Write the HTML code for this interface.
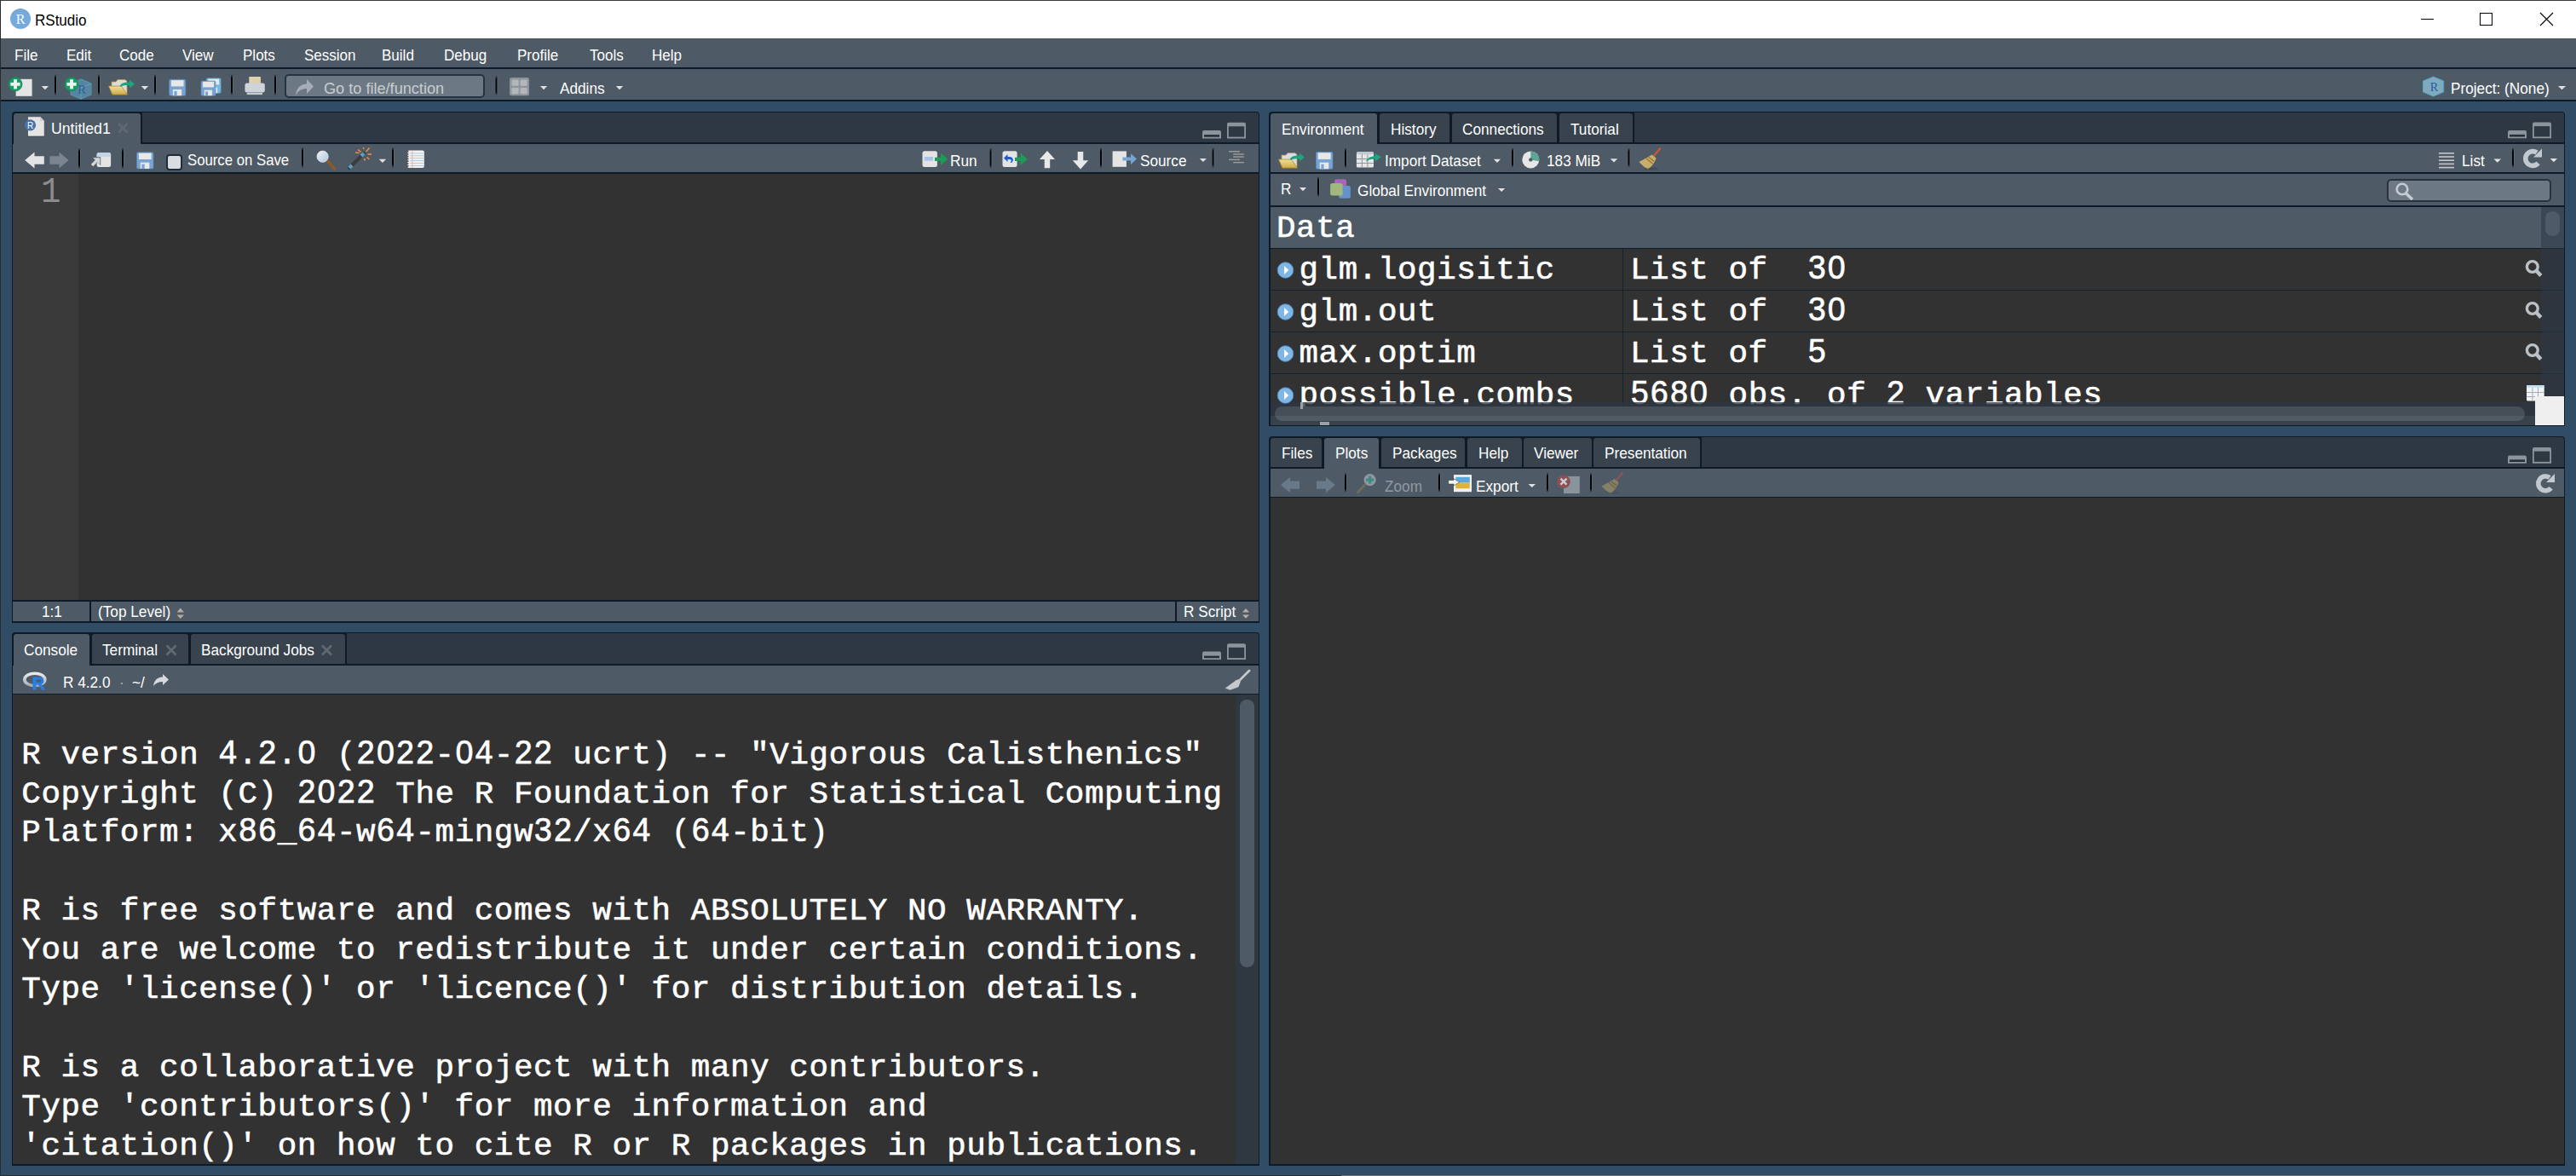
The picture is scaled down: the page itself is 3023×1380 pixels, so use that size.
<!DOCTYPE html>
<html><head><meta charset="utf-8"><title>RStudio</title>
<style>
html,body{margin:0;padding:0;width:3023px;height:1380px;overflow:hidden;background:#314c65}
body>div,body>svg{position:absolute}
.t{white-space:pre}
.m{-webkit-text-stroke:0.6px #fff}
.d{display:inline-block;transform:scaleY(1.09);transform-origin:0 28.7px}
</style></head><body>
<div style="left:0px;top:0px;width:3023px;height:1380px;background:#314c65;"></div>
<div style="left:0px;top:0px;width:3023px;height:45px;background:#ffffff;"></div>
<div style="left:0px;top:0px;width:3023px;height:1px;background:#3c3c3c;"></div>
<div style="left:0px;top:0px;width:1px;height:1380px;background:#2b2b2b;"></div>
<div class="t" style="left:41.00px;top:14.94px;font-size:18.5px;line-height:18.5px;color:#000;font-family:'Liberation Sans', sans-serif;transform:scaleX(0.92);transform-origin:0 0;">RStudio</div>
<div style="left:1px;top:45px;width:3022px;height:34px;background:#4e5a65;"></div>
<div style="left:1px;top:79px;width:3022px;height:2px;background:#0d1b28;"></div>
<div class="t" style="left:16.75px;top:55.94px;font-size:18.5px;line-height:18.5px;color:#fff;font-family:'Liberation Sans', sans-serif;transform:scaleX(0.92);transform-origin:0 0;">File</div>
<div class="t" style="left:77.75px;top:55.94px;font-size:18.5px;line-height:18.5px;color:#fff;font-family:'Liberation Sans', sans-serif;transform:scaleX(0.92);transform-origin:0 0;">Edit</div>
<div class="t" style="left:140.00px;top:55.94px;font-size:18.5px;line-height:18.5px;color:#fff;font-family:'Liberation Sans', sans-serif;transform:scaleX(0.92);transform-origin:0 0;">Code</div>
<div class="t" style="left:214.00px;top:55.94px;font-size:18.5px;line-height:18.5px;color:#fff;font-family:'Liberation Sans', sans-serif;transform:scaleX(0.92);transform-origin:0 0;">View</div>
<div class="t" style="left:285.00px;top:55.94px;font-size:18.5px;line-height:18.5px;color:#fff;font-family:'Liberation Sans', sans-serif;transform:scaleX(0.92);transform-origin:0 0;">Plots</div>
<div class="t" style="left:356.50px;top:55.94px;font-size:18.5px;line-height:18.5px;color:#fff;font-family:'Liberation Sans', sans-serif;transform:scaleX(0.92);transform-origin:0 0;">Session</div>
<div class="t" style="left:448.00px;top:55.94px;font-size:18.5px;line-height:18.5px;color:#fff;font-family:'Liberation Sans', sans-serif;transform:scaleX(0.92);transform-origin:0 0;">Build</div>
<div class="t" style="left:521.00px;top:55.94px;font-size:18.5px;line-height:18.5px;color:#fff;font-family:'Liberation Sans', sans-serif;transform:scaleX(0.92);transform-origin:0 0;">Debug</div>
<div class="t" style="left:607.00px;top:55.94px;font-size:18.5px;line-height:18.5px;color:#fff;font-family:'Liberation Sans', sans-serif;transform:scaleX(0.92);transform-origin:0 0;">Profile</div>
<div class="t" style="left:691.50px;top:55.94px;font-size:18.5px;line-height:18.5px;color:#fff;font-family:'Liberation Sans', sans-serif;transform:scaleX(0.92);transform-origin:0 0;">Tools</div>
<div class="t" style="left:765.00px;top:55.94px;font-size:18.5px;line-height:18.5px;color:#fff;font-family:'Liberation Sans', sans-serif;transform:scaleX(0.92);transform-origin:0 0;">Help</div>
<div style="left:1px;top:81px;width:3022px;height:36px;background:#4e5a65;"></div>
<div style="left:1px;top:117px;width:3022px;height:2px;background:#0d1b28;"></div>
<div style="left:14px;top:131px;width:1464px;height:600px;background:#0d1b28;border-radius:4px 4px 0 0"></div>
<div style="left:166.5px;top:132px;width:1310.5px;height:35px;background:#2e3842;border-radius:0 3px 0 0"></div>
<div style="left:16px;top:133px;width:148.5px;height:36px;background:#4e5a65;border-radius:3px 3px 0 0"></div>
<div style="left:15px;top:169px;width:1462px;height:33px;background:#4e5a65;"></div>
<div style="left:15px;top:204px;width:1462px;height:500px;background:#323232;"></div>
<div style="left:15px;top:204px;width:77px;height:500px;background:#3a3a3a;"></div>
<div style="left:15px;top:706px;width:1462px;height:23px;background:#4e5a65;"></div>
<div style="left:105px;top:706px;width:2px;height:23px;background:#0d1b28;"></div>
<div style="left:1379px;top:706px;width:2px;height:23px;background:#0d1b28;"></div>
<div style="left:14px;top:742px;width:1464px;height:626px;background:#0d1b28;border-radius:4px 4px 0 0"></div>
<div style="left:407px;top:743px;width:1070px;height:36px;background:#2e3842;border-radius:0 3px 0 0"></div>
<div style="left:16px;top:744px;width:89px;height:37px;background:#4e5a65;border-radius:3px 3px 0 0"></div>
<div style="left:107.7px;top:744px;width:113.3px;height:35px;background:#38434d;border-radius:3px 3px 0 0"></div>
<div style="left:224px;top:744px;width:181px;height:35px;background:#38434d;border-radius:3px 3px 0 0"></div>
<div style="left:15px;top:781px;width:1462px;height:33px;background:#4e5a65;"></div>
<div style="left:15px;top:815px;width:1462px;height:551px;background:#323232;"></div>
<div style="left:1450px;top:815px;width:27px;height:551px;background:#2f3740;"></div>
<div style="left:1455px;top:821px;width:17px;height:314px;background:#4e5a65;border-radius:8px"></div>
<div style="left:1489px;top:131px;width:1521px;height:369px;background:#0d1b28;border-radius:4px 4px 0 0"></div>
<div style="left:1918px;top:132px;width:1091px;height:35px;background:#2e3842;border-radius:0 3px 0 0"></div>
<div style="left:1491px;top:133px;width:125px;height:36px;background:#4e5a65;border-radius:3px 3px 0 0"></div>
<div style="left:1619px;top:133px;width:82px;height:34px;background:#38434d;border-radius:3px 3px 0 0"></div>
<div style="left:1704px;top:133px;width:123px;height:34px;background:#38434d;border-radius:3px 3px 0 0"></div>
<div style="left:1830px;top:133px;width:86px;height:34px;background:#38434d;border-radius:3px 3px 0 0"></div>
<div style="left:1491px;top:169px;width:1518px;height:33px;background:#4e5a65;"></div>
<div style="left:1491px;top:204px;width:1518px;height:37px;background:#4e5a65;"></div>
<div style="left:1491px;top:243px;width:1518px;height:48px;background:#4e5a65;"></div>
<div style="left:1491px;top:292px;width:1518px;height:207px;background:#323232;"></div>
<div style="left:1491px;top:340px;width:1518px;height:1px;background:#13222f;"></div>
<div style="left:1491px;top:389px;width:1518px;height:1px;background:#13222f;"></div>
<div style="left:1491px;top:438px;width:1518px;height:1px;background:#13222f;"></div>
<div style="left:1904px;top:292px;width:1px;height:207px;background:#13222f;"></div>
<div style="left:2801px;top:210px;width:193px;height:27px;background:#6c7984;border:2px solid #26333f;border-radius:5px;box-sizing:border-box"></div>
<div style="left:1489px;top:512px;width:1521px;height:856px;background:#0d1b28;border-radius:4px 4px 0 0"></div>
<div style="left:1997px;top:513px;width:1012px;height:35px;background:#2e3842;border-radius:0 3px 0 0"></div>
<div style="left:1491px;top:514px;width:60px;height:34px;background:#38434d;border-radius:3px 3px 0 0"></div>
<div style="left:1554px;top:514px;width:64px;height:36px;background:#4e5a65;border-radius:3px 3px 0 0"></div>
<div style="left:1621px;top:514px;width:98px;height:34px;background:#38434d;border-radius:3px 3px 0 0"></div>
<div style="left:1722px;top:514px;width:63.5px;height:34px;background:#38434d;border-radius:3px 3px 0 0"></div>
<div style="left:1788px;top:514px;width:79.5px;height:34px;background:#38434d;border-radius:3px 3px 0 0"></div>
<div style="left:1870px;top:514px;width:125px;height:34px;background:#38434d;border-radius:3px 3px 0 0"></div>
<div style="left:1491px;top:550px;width:1518px;height:33px;background:#4e5a65;"></div>
<div style="left:1491px;top:584px;width:1518px;height:782px;background:#323232;"></div>
<div style="left:334px;top:87px;width:235px;height:28px;background:#6c7984;border:2px solid #26333f;border-radius:5px;box-sizing:border-box"></div>
<div style="left:0px;top:1379px;width:3023px;height:1px;background:#2b2b2b;"></div>
<div style="left:1574px;top:1379px;width:1449px;height:1px;background:#727272;"></div>
<div class="t" style="left:59.90px;top:142.14px;font-size:18.5px;line-height:18.5px;color:#fff;font-family:'Liberation Sans', sans-serif;transform:scaleX(0.955);transform-origin:0 0;">Untitled1</div>
<div class="t" style="left:219.50px;top:178.89px;font-size:18.5px;line-height:18.5px;color:#fff;font-family:'Liberation Sans', sans-serif;transform:scaleX(0.905);transform-origin:0 0;">Source on Save</div>
<div class="t" style="left:1115.40px;top:180.04px;font-size:18.5px;line-height:18.5px;color:#fff;font-family:'Liberation Sans', sans-serif;transform:scaleX(0.93);transform-origin:0 0;">Run</div>
<div class="t" style="left:1338.00px;top:180.14px;font-size:18.5px;line-height:18.5px;color:#fff;font-family:'Liberation Sans', sans-serif;transform:scaleX(0.93);transform-origin:0 0;">Source</div>
<div class="t" style="left:48.50px;top:708.89px;font-size:18.5px;line-height:18.5px;color:#fff;font-family:'Liberation Sans', sans-serif;transform:scaleX(0.93);transform-origin:0 0;">1:1</div>
<div class="t" style="left:114.50px;top:708.89px;font-size:18.5px;line-height:18.5px;color:#fff;font-family:'Liberation Sans', sans-serif;transform:scaleX(0.93);transform-origin:0 0;">(Top Level)</div>
<div class="t" style="left:1389.00px;top:709.34px;font-size:18.5px;line-height:18.5px;color:#fff;font-family:'Liberation Sans', sans-serif;transform:scaleX(0.93);transform-origin:0 0;">R Script</div>
<div class="t" style="left:48.00px;top:207.62px;font-size:39px;line-height:39px;color:#8c8c8c;font-family:'Liberation Mono', monospace;"><span class="d">1</span></div>
<div class="t" style="left:380.00px;top:94.89px;font-size:18.5px;line-height:18.5px;color:#c9cdd1;font-family:'Liberation Sans', sans-serif;transform:scaleX(0.98);transform-origin:0 0;">Go to file/function</div>
<div class="t" style="left:657.00px;top:95.14px;font-size:18.5px;line-height:18.5px;color:#fff;font-family:'Liberation Sans', sans-serif;transform:scaleX(0.93);transform-origin:0 0;">Addins</div>
<div class="t" style="left:2875.70px;top:94.84px;font-size:18.5px;line-height:18.5px;color:#fff;font-family:'Liberation Sans', sans-serif;transform:scaleX(0.93);transform-origin:0 0;">Project: (None)</div>
<div class="t" style="left:27.75px;top:753.89px;font-size:18.5px;line-height:18.5px;color:#fff;font-family:'Liberation Sans', sans-serif;transform:scaleX(0.93);transform-origin:0 0;">Console</div>
<div class="t" style="left:120.00px;top:753.89px;font-size:18.5px;line-height:18.5px;color:#fff;font-family:'Liberation Sans', sans-serif;transform:scaleX(0.93);transform-origin:0 0;">Terminal</div>
<div class="t" style="left:236.00px;top:753.89px;font-size:18.5px;line-height:18.5px;color:#fff;font-family:'Liberation Sans', sans-serif;transform:scaleX(0.93);transform-origin:0 0;">Background Jobs</div>
<div class="t" style="left:73.90px;top:792.04px;font-size:18.5px;line-height:18.5px;color:#fff;font-family:'Liberation Sans', sans-serif;transform:scaleX(0.93);transform-origin:0 0;">R 4.2.0</div>
<div class="t" style="left:139.50px;top:792.04px;font-size:18.5px;line-height:18.5px;color:#a8b0b8;font-family:'Liberation Sans', sans-serif;transform:scaleX(0.93);transform-origin:0 0;">·</div>
<div class="t" style="left:155.00px;top:792.04px;font-size:18.5px;line-height:18.5px;color:#fff;font-family:'Liberation Sans', sans-serif;transform:scaleX(0.93);transform-origin:0 0;">~/</div>
<div class="t m" style="left:25.30px;top:867.52px;font-size:37.5px;line-height:37.5px;color:#fff;font-family:'Liberation Mono', monospace;letter-spacing:0.6px">R version <span class="d">4</span>.<span class="d">2</span>.<span class="d">0</span> (<span class="d">2022</span>-<span class="d">04</span>-<span class="d">22</span> ucrt) -- "Vigorous Calisthenics"</div>
<div style="left:356.66px;top:878.05px;width:6.8px;height:8.6px;background:#323232"></div>
<div style="left:449.07px;top:878.05px;width:6.8px;height:8.6px;background:#323232"></div>
<div style="left:541.49px;top:878.05px;width:6.8px;height:8.6px;background:#323232"></div>
<div class="t m" style="left:25.30px;top:913.50px;font-size:37.5px;line-height:37.5px;color:#fff;font-family:'Liberation Mono', monospace;letter-spacing:0.6px">Copyright (C) <span class="d">2022</span> The R Foundation for Statistical Computing</div>
<div style="left:379.76px;top:924.02px;width:6.8px;height:8.6px;background:#323232"></div>
<div class="t m" style="left:25.30px;top:959.47px;font-size:37.5px;line-height:37.5px;color:#fff;font-family:'Liberation Mono', monospace;letter-spacing:0.6px">Platform: x<span class="d">86</span>_<span class="d">64</span>-w<span class="d">64</span>-mingw<span class="d">32</span>/x<span class="d">64</span> (<span class="d">64</span>-bit)</div>
<div class="t m" style="left:25.30px;top:1051.42px;font-size:37.5px;line-height:37.5px;color:#fff;font-family:'Liberation Mono', monospace;letter-spacing:0.6px">R is free software and comes with ABSOLUTELY NO WARRANTY.</div>
<div class="t m" style="left:25.30px;top:1097.40px;font-size:37.5px;line-height:37.5px;color:#fff;font-family:'Liberation Mono', monospace;letter-spacing:0.6px">You are welcome to redistribute it under certain conditions.</div>
<div class="t m" style="left:25.30px;top:1143.37px;font-size:37.5px;line-height:37.5px;color:#fff;font-family:'Liberation Mono', monospace;letter-spacing:0.6px">Type 'license()' or 'licence()' for distribution details.</div>
<div class="t m" style="left:25.30px;top:1235.32px;font-size:37.5px;line-height:37.5px;color:#fff;font-family:'Liberation Mono', monospace;letter-spacing:0.6px">R is a collaborative project with many contributors.</div>
<div class="t m" style="left:25.30px;top:1281.30px;font-size:37.5px;line-height:37.5px;color:#fff;font-family:'Liberation Mono', monospace;letter-spacing:0.6px">Type 'contributors()' for more information and</div>
<div class="t m" style="left:25.30px;top:1327.27px;font-size:37.5px;line-height:37.5px;color:#fff;font-family:'Liberation Mono', monospace;letter-spacing:0.6px">'citation()' on how to cite R or R packages in publications.</div>
<div class="t" style="left:1503.50px;top:142.64px;font-size:18.5px;line-height:18.5px;color:#fff;font-family:'Liberation Sans', sans-serif;transform:scaleX(0.93);transform-origin:0 0;">Environment</div>
<div class="t" style="left:1631.50px;top:142.64px;font-size:18.5px;line-height:18.5px;color:#fff;font-family:'Liberation Sans', sans-serif;transform:scaleX(0.93);transform-origin:0 0;">History</div>
<div class="t" style="left:1716.00px;top:142.64px;font-size:18.5px;line-height:18.5px;color:#fff;font-family:'Liberation Sans', sans-serif;transform:scaleX(0.93);transform-origin:0 0;">Connections</div>
<div class="t" style="left:1842.75px;top:142.64px;font-size:18.5px;line-height:18.5px;color:#fff;font-family:'Liberation Sans', sans-serif;transform:scaleX(0.93);transform-origin:0 0;">Tutorial</div>
<div class="t" style="left:1624.50px;top:180.14px;font-size:18.5px;line-height:18.5px;color:#fff;font-family:'Liberation Sans', sans-serif;transform:scaleX(0.93);transform-origin:0 0;">Import Dataset</div>
<div class="t" style="left:1815.40px;top:179.74px;font-size:18.5px;line-height:18.5px;color:#fff;font-family:'Liberation Sans', sans-serif;transform:scaleX(0.93);transform-origin:0 0;">183 MiB</div>
<div class="t" style="left:2888.80px;top:180.14px;font-size:18.5px;line-height:18.5px;color:#fff;font-family:'Liberation Sans', sans-serif;transform:scaleX(0.93);transform-origin:0 0;">List</div>
<div class="t" style="left:1502.90px;top:213.14px;font-size:18.5px;line-height:18.5px;color:#fff;font-family:'Liberation Sans', sans-serif;transform:scaleX(0.93);transform-origin:0 0;">R</div>
<div class="t" style="left:1592.50px;top:214.94px;font-size:18.5px;line-height:18.5px;color:#fff;font-family:'Liberation Sans', sans-serif;transform:scaleX(0.93);transform-origin:0 0;">Global Environment</div>
<div class="t m" style="left:1498.00px;top:250.27px;font-size:37.5px;line-height:37.5px;color:#fff;font-family:'Liberation Mono', monospace;letter-spacing:0.6px">Data</div>
<div class="t m" style="left:1524.50px;top:299.27px;font-size:37.5px;line-height:37.5px;color:#fff;font-family:'Liberation Mono', monospace;letter-spacing:0.6px">glm.logisitic</div>
<div class="t m" style="left:1913.00px;top:299.27px;font-size:37.5px;line-height:37.5px;color:#fff;font-family:'Liberation Mono', monospace;letter-spacing:0.6px">List of  <span class="d">30</span></div>
<div style="left:2151.94px;top:309.80px;width:6.8px;height:8.6px;background:#323232"></div>
<div class="t m" style="left:1524.50px;top:348.27px;font-size:37.5px;line-height:37.5px;color:#fff;font-family:'Liberation Mono', monospace;letter-spacing:0.6px">glm.out</div>
<div class="t m" style="left:1913.00px;top:348.27px;font-size:37.5px;line-height:37.5px;color:#fff;font-family:'Liberation Mono', monospace;letter-spacing:0.6px">List of  <span class="d">30</span></div>
<div style="left:2151.94px;top:358.80px;width:6.8px;height:8.6px;background:#323232"></div>
<div class="t m" style="left:1524.50px;top:397.27px;font-size:37.5px;line-height:37.5px;color:#fff;font-family:'Liberation Mono', monospace;letter-spacing:0.6px">max.optim</div>
<div class="t m" style="left:1913.00px;top:397.27px;font-size:37.5px;line-height:37.5px;color:#fff;font-family:'Liberation Mono', monospace;letter-spacing:0.6px">List of  <span class="d">5</span></div>
<div class="t m" style="left:1524.50px;top:446.27px;font-size:37.5px;line-height:37.5px;color:#fff;font-family:'Liberation Mono', monospace;letter-spacing:0.6px">possible.combs</div>
<div class="t m" style="left:1913.00px;top:446.27px;font-size:37.5px;line-height:37.5px;color:#fff;font-family:'Liberation Mono', monospace;letter-spacing:0.6px"><span class="d">5680</span> obs. of <span class="d">2</span> variables</div>
<div style="left:1990.21px;top:456.80px;width:6.8px;height:8.6px;background:#323232"></div>
<div class="t" style="left:1504.00px;top:523.14px;font-size:18.5px;line-height:18.5px;color:#fff;font-family:'Liberation Sans', sans-serif;transform:scaleX(0.93);transform-origin:0 0;">Files</div>
<div class="t" style="left:1566.50px;top:523.14px;font-size:18.5px;line-height:18.5px;color:#fff;font-family:'Liberation Sans', sans-serif;transform:scaleX(0.93);transform-origin:0 0;">Plots</div>
<div class="t" style="left:1634.00px;top:523.14px;font-size:18.5px;line-height:18.5px;color:#fff;font-family:'Liberation Sans', sans-serif;transform:scaleX(0.93);transform-origin:0 0;">Packages</div>
<div class="t" style="left:1734.50px;top:523.14px;font-size:18.5px;line-height:18.5px;color:#fff;font-family:'Liberation Sans', sans-serif;transform:scaleX(0.93);transform-origin:0 0;">Help</div>
<div class="t" style="left:1800.00px;top:523.14px;font-size:18.5px;line-height:18.5px;color:#fff;font-family:'Liberation Sans', sans-serif;transform:scaleX(0.93);transform-origin:0 0;">Viewer</div>
<div class="t" style="left:1882.75px;top:523.14px;font-size:18.5px;line-height:18.5px;color:#fff;font-family:'Liberation Sans', sans-serif;transform:scaleX(0.93);transform-origin:0 0;">Presentation</div>
<div class="t" style="left:1624.50px;top:562.14px;font-size:18.5px;line-height:18.5px;color:#8f9aa3;font-family:'Liberation Sans', sans-serif;transform:scaleX(0.93);transform-origin:0 0;">Zoom</div>
<div class="t" style="left:1732.30px;top:561.74px;font-size:18.5px;line-height:18.5px;color:#fff;font-family:'Liberation Sans', sans-serif;transform:scaleX(0.93);transform-origin:0 0;">Export</div>
<div style="left:2982px;top:243px;width:27px;height:222px;background:rgba(45,57,74,0.55);"></div>
<div style="left:2987px;top:248px;width:17px;height:29px;background:#4e5a65;border-radius:8px"></div>
<div style="left:1491px;top:472px;width:1491px;height:16px;background:rgba(45,54,65,0.78);"></div>
<div style="left:1491px;top:488px;width:1491px;height:11px;background:#38424b;"></div>
<div style="left:1496px;top:477px;width:1467px;height:17px;background:linear-gradient(#464e57 0,#464e57 11px,#505b66 11px);border-radius:8.5px"></div>
<div style="left:194.7px;top:180.9px;width:19.0px;height:19.0px;background:#d9dde1;border:2px solid #1f2d3a;border-radius:4px;box-sizing:border-box"></div>
<svg style="left:0;top:0" width="3023" height="1380" viewBox="0 0 3023 1380"><defs><linearGradient id="sepg" x1="0" y1="0" x2="0" y2="1"><stop offset="0" stop-color="#000" stop-opacity="0"/><stop offset="0.18" stop-color="#000" stop-opacity="0.95"/><stop offset="0.82" stop-color="#000" stop-opacity="0.95"/><stop offset="1" stop-color="#000" stop-opacity="0"/></linearGradient><linearGradient id="fold" x1="0" y1="0" x2="0" y2="1"><stop offset="0" stop-color="#eedfa0"/><stop offset="1" stop-color="#d1aa45"/></linearGradient><linearGradient id="lens" x1="0" y1="0" x2="1" y2="1"><stop offset="0" stop-color="#f4f4f4"/><stop offset="1" stop-color="#a9c4e0"/></linearGradient><linearGradient id="ring" x1="0" y1="0" x2="0" y2="1"><stop offset="0" stop-color="#e9eaec"/><stop offset="1" stop-color="#a9adb3"/></linearGradient></defs><circle cx="24" cy="22" r="12" fill="#75aadb"/><text x="24" y="28" text-anchor="middle" font-family="Liberation Serif" font-size="16" fill="#fff">R</text><rect x="2841" y="22" width="15" height="1" fill="#000"/><rect x="2910.5" y="15.5" width="14" height="14" fill="none" stroke="#000" stroke-width="1"/><path d="M2981 15L2996 30M2996 15L2981 30" stroke="#000" stroke-width="1.1"/><rect x="18.6" y="92.8" width="19" height="20" fill="#e4e4e4"/><circle cx="18" cy="98.8" r="8" fill="#179c66" stroke="#0f8a57" stroke-width="0.8"/><rect x="12.4" y="96.88" width="11.2" height="3.84" fill="#eef2ee"/><rect x="16.08" y="93.2" width="3.84" height="11.2" fill="#eef2ee"/><path d="M48.7 101H57L52.85 105.2Z" fill="#e2e2e2"/><rect x="64" y="87" width="2" height="25" fill="url(#sepg)"/><rect x="66" y="90" width="1" height="19" fill="#66717b" opacity="0.5"/><g opacity="0.75"><path d="M83 97.948 L95.0 92.8 L107 97.948 L107 111.05199999999999 L95.0 116.19999999999999 L83 111.05199999999999Z" fill="#5a93b5" stroke="#4fb3cf" stroke-width="1"/><path d="M83 97.948 L95.0 103.096 L107 97.948 M95.0 103.096 L95.0 116.19999999999999" stroke="#6cc3da" stroke-width="0.8" fill="none"/><text x="96.0" y="109.648" text-anchor="middle" font-family="Liberation Serif" font-size="14.508" fill="#1f5fa8">R</text></g><circle cx="84" cy="98.8" r="8" fill="#179c66" stroke="#0f8a57" stroke-width="0.8"/><rect x="78.4" y="96.88" width="11.2" height="3.84" fill="#eef2ee"/><rect x="82.08" y="93.2" width="3.84" height="11.2" fill="#eef2ee"/><rect x="115" y="87" width="2" height="25" fill="url(#sepg)"/><rect x="117" y="90" width="1" height="19" fill="#66717b" opacity="0.5"/><g transform="translate(127,92.5) scale(1.0)"><path d="M4 3.5 L9 3.5 L11 1 L20 1 L22 3 L22 17 L4 17Z" fill="#dcdcdc" stroke="#b89a3c" stroke-width="0.8"/><path d="M0.5 8.5 L15.5 8.5 L22.5 18.5 L5 18.5Z" fill="url(#fold)" stroke="#b08f2e" stroke-width="0.8"/><path d="M14 7.5 C17 4 21 3.6 25 4.2 L25 1 L31 6 L25 11 L25 7.8 C21 7.2 17.5 7.6 14 9.5Z" fill="#1fa37e"/></g><path d="M165.7 101H174.1L169.89999999999998 105.2Z" fill="#e2e2e2"/><rect x="181" y="87" width="2" height="25" fill="url(#sepg)"/><rect x="183" y="90" width="1" height="19" fill="#66717b" opacity="0.5"/><rect x="198.6" y="93.2" width="19.200000000000017" height="19.0" rx="1.5" fill="#77a4d3" stroke="#5b86b5" stroke-width="0.6"/><rect x="200.904" y="94.15" width="14.592000000000013" height="7.22" fill="#e8e8e8"/><rect x="202.824" y="104.98" width="10.36800000000001" height="7.22" fill="#e8e8e8"/><rect x="204.36" y="106.88" width="3.2640000000000033" height="5.32" fill="#77a4d3"/><rect x="242.3" y="91.8" width="16.899999999999977" height="17.5" rx="1.5" fill="#74b9de" stroke="#4f9cc8" stroke-width="0.6"/><rect x="244.328" y="92.675" width="12.843999999999983" height="6.65" fill="#e8e8e8"/><rect x="246.018" y="102.64999999999999" width="9.125999999999989" height="6.65" fill="#e8e8e8"/><rect x="247.37" y="104.39999999999999" width="2.8729999999999962" height="4.9" fill="#74b9de"/><rect x="236" y="95" width="17" height="17.200000000000003" rx="1.5" fill="#77a4d3" stroke="#5b86b5" stroke-width="0.6"/><rect x="238.04" y="95.86" width="12.92" height="6.536000000000001" fill="#e8e8e8"/><rect x="239.74" y="105.664" width="9.18" height="6.536000000000001" fill="#e8e8e8"/><rect x="241.1" y="107.384" width="2.89" height="4.816000000000002" fill="#77a4d3"/><rect x="271" y="87" width="2" height="25" fill="url(#sepg)"/><rect x="273" y="90" width="1" height="19" fill="#66717b" opacity="0.5"/><rect x="292.3" y="90" width="13.6" height="10" fill="#ddd2ad"/><rect x="287.4" y="97.4" width="23.4" height="11.2" rx="2.5" fill="#cfd3da"/><rect x="289.8" y="108.9" width="18.2" height="2.2" fill="#c4ccd4"/><rect x="322" y="87" width="2" height="25" fill="url(#sepg)"/><rect x="324" y="90" width="1" height="19" fill="#66717b" opacity="0.5"/><path d="M347 112 C348 102 354 98.5 360 98.5 L360 93 L368 101.5 L360 110 L360 104 C355 104 350 106 347 112Z" fill="#a7adb8"/><rect x="581.5" y="88.5" width="2" height="23.5" fill="url(#sepg)"/><rect x="583.5" y="91.5" width="1" height="17.5" fill="#66717b" opacity="0.5"/><rect x="598" y="91" width="23" height="21.3" rx="2.5" fill="#8d949b"/><rect x="600.5" y="93.5" width="8.2" height="7.2" rx="1.2" fill="#b2b7bc"/><rect x="610.5" y="93.5" width="8.2" height="7.2" rx="1.2" fill="#b2b7bc"/><rect x="600.5" y="103" width="8.2" height="7.2" rx="1.2" fill="#b2b7bc"/><rect x="610.5" y="103" width="8.2" height="7.2" rx="1.2" fill="#b2b7bc"/><path d="M634 101H642.1L638.05 105.3Z" fill="#e2e2e2"/><path d="M722.8 101H731.2L727.0 105.3Z" fill="#e2e2e2"/><g opacity="0.85"><path d="M2843.5 95.06 L2855.6 90 L2867.7 95.06 L2867.7 107.94 L2855.6 113 L2843.5 107.94Z" fill="#8ab8cf" stroke="#4fb3cf" stroke-width="1"/><path d="M2843.5 95.06 L2855.6 100.12 L2867.7 95.06 M2855.6 100.12 L2855.6 113" stroke="#6cc3da" stroke-width="0.8" fill="none"/><text x="2856.6" y="106.56" text-anchor="middle" font-family="Liberation Serif" font-size="14.26" fill="#1f5fa8">R</text></g><path d="M3002 101H3011L3006.5 105.3Z" fill="#e2e2e2"/><path d="M32.5 136.8 H47 L52.2 142 V160 H32.5Z" fill="#e4e4e4" stroke="#2b3540" stroke-width="0.6"/><path d="M47 136.8 V142 H52.2" fill="#d0d0d0"/><circle cx="35.5" cy="146.8" r="6.6" fill="#4a72a8"/><text x="35.6" y="150.6" text-anchor="middle" font-family="Liberation Sans" font-size="10" fill="#fff">R</text><path d="M139 145 L149.5 155.5 M149.5 145 L139 155.5" stroke="#5f6972" stroke-width="2.8"/><path d="M1411 162.4 V155.1 Q1411 153.1 1413 153.1 H1431 Q1433 153.1 1433 155.1 V162.4Z" fill="#8b949c"/><rect x="1413" y="158.1" width="18" height="2.6" fill="#252e37"/><path d="M1440 162.39999999999998 V145.7 Q1440 143.7 1442 143.7 H1460 Q1462 143.7 1462 145.7 V162.39999999999998Z" fill="#8b949c"/><rect x="1441.8" y="148.29999999999998" width="18.4" height="12.3" fill="#2e3842"/><path d="M29.2 188.05 L40.5 178.5 L40.5 183.275 L51.8 183.275 L51.8 192.825 L40.5 192.825 L40.5 197.6Z" fill="#e4e4e4"/><path d="M80.6 188.05 L69.5 178.5 L69.5 183.275 L58.4 183.275 L58.4 192.825 L69.5 192.825 L69.5 197.6Z" fill="#7a858f"/><rect x="92" y="173.5" width="2" height="24.80000000000001" fill="url(#sepg)"/><rect x="94" y="176.5" width="1" height="18.80000000000001" fill="#66717b" opacity="0.5"/><rect x="113.6" y="178.9" width="16.5" height="17.1" rx="2.5" fill="#e4e4e4"/><path d="M113.6 184 V181.4 Q113.6 178.9 116.1 178.9 H127.6 Q130.1 178.9 130.1 181.4 V184Z" fill="#c2d6e8"/><path d="M108 194 L114 188" stroke="#5d6872" stroke-width="4.4"/><path d="M108.2 184.3 L118.2 184.3 L118.2 194.3Z" fill="#5d6872"/><path d="M108 194 L114 188" stroke="#d6d6d8" stroke-width="3.2"/><path d="M109.2 185.2 L117.3 185.2 L117.3 193.3Z" fill="#d6d6d8"/><rect x="143" y="173.5" width="2" height="24.80000000000001" fill="url(#sepg)"/><rect x="145" y="176.5" width="1" height="18.80000000000001" fill="#66717b" opacity="0.5"/><rect x="160.5" y="178.7" width="19.5" height="19.30000000000001" rx="1.5" fill="#77a4d3" stroke="#5b86b5" stroke-width="0.6"/><rect x="162.84" y="179.665" width="14.82" height="7.334000000000004" fill="#e8e8e8"/><rect x="164.79" y="190.666" width="10.530000000000001" height="7.334000000000004" fill="#e8e8e8"/><rect x="166.35" y="192.596" width="3.3150000000000004" height="5.4040000000000035" fill="#77a4d3"/><rect x="354" y="172.5" width="2" height="24.80000000000001" fill="url(#sepg)"/><rect x="356" y="175.5" width="1" height="18.80000000000001" fill="#66717b" opacity="0.5"/><path d="M384 188.5 L392.5 198" stroke="#8b5a2b" stroke-width="3.6" stroke-linecap="round"/><circle cx="378.6" cy="183.7" r="6.6" fill="url(#lens)" stroke="#e6eef6" stroke-width="0.8"/><path d="M410 197 L427 180" stroke="#3d3d3d" stroke-width="4" stroke-linecap="round"/><path d="M410 197 L413 194 M424 183 L427 180" stroke="#5aa0c8" stroke-width="4.2"/><path d="M420 175.5 L423.5 178.5" stroke="#f08a4b" stroke-width="1.6"/><path d="M426.5 173 L426.8 175" stroke="#f08a4b" stroke-width="1.6"/><path d="M429.5 178 L433.5 173.5" stroke="#f08a4b" stroke-width="1.6"/><path d="M431.5 181 L436 181" stroke="#f08a4b" stroke-width="1.6"/><path d="M430.5 184.5 L433.5 187" stroke="#f08a4b" stroke-width="1.6"/><path d="M427.5 186 L428.5 188.5" stroke="#f08a4b" stroke-width="1.6"/><path d="M417 179 L421.5 179.5" stroke="#f08a4b" stroke-width="1.6"/><path d="M444.7 186.8H453.1L448.9 191.1Z" fill="#e2e2e2"/><rect x="460" y="172.5" width="2" height="24.80000000000001" fill="url(#sepg)"/><rect x="462" y="175.5" width="1" height="18.80000000000001" fill="#66717b" opacity="0.5"/><rect x="478" y="176.5" width="19.8" height="20.5" rx="2" fill="#f2f2f2"/><rect x="481" y="179.5" width="16" height="0.8" fill="#a9c3dc"/><rect x="481" y="182.4" width="16" height="0.8" fill="#a9c3dc"/><rect x="481" y="185.3" width="16" height="0.8" fill="#a9c3dc"/><rect x="481" y="188.2" width="16" height="0.8" fill="#a9c3dc"/><rect x="481" y="191.1" width="16" height="0.8" fill="#a9c3dc"/><rect x="481" y="194.0" width="16" height="0.8" fill="#a9c3dc"/><rect x="483.5" y="176.5" width="0.8" height="20.5" fill="#e5a3a3"/><circle cx="478.5" cy="178.0" r="1.1" fill="#555"/><circle cx="478.5" cy="180.8" r="1.1" fill="#555"/><circle cx="478.5" cy="183.6" r="1.1" fill="#555"/><circle cx="478.5" cy="186.4" r="1.1" fill="#555"/><circle cx="478.5" cy="189.2" r="1.1" fill="#555"/><circle cx="478.5" cy="192.0" r="1.1" fill="#555"/><circle cx="478.5" cy="194.8" r="1.1" fill="#555"/><rect x="1082.5" y="177.2" width="17.4" height="18.9" rx="2.5" fill="#e4e4e4"/><rect x="1084.8" y="184" width="10.2" height="4.6" fill="#a8c5e8"/><path d="M1097 184.7 H1104 V179.6 L1112.1 186.8 L1104 194 V188.9 H1097Z" fill="#1d9b56"/><rect x="1161.6" y="173.3" width="2" height="24.399999999999977" fill="url(#sepg)"/><rect x="1163.6" y="176.3" width="1" height="18.399999999999977" fill="#66717b" opacity="0.5"/><rect x="1176.5" y="177.2" width="17.1" height="18.9" rx="2.5" fill="#e4e4e4"/><path d="M1187 191 C1190 189 1189.5 184 1184.5 184 L1182.5 184 L1182.5 181 L1178 185.5 L1182.5 190 L1182.5 187 L1184.5 187 C1187 187 1187.5 189 1185.5 191Z" fill="#1f5bd1"/><path d="M1191 184.7 H1197.5 V179.6 L1205.8 186.8 L1197.5 194 V188.9 H1191Z" fill="#1d9b56"/><path d="M1228.95 176.9 L1238 187.10000000000002 L1232.208 187.10000000000002 L1232.208 197.3 L1225.692 197.3 L1225.692 187.10000000000002 L1219.9 187.10000000000002Z" fill="#e8e8e8"/><path d="M1267.9499999999998 198.5 L1277.1 188.3 L1271.244 188.3 L1271.244 178.1 L1264.656 178.1 L1264.656 188.3 L1258.8 188.3Z" fill="#e8e8e8"/><rect x="1291" y="173" width="2" height="24.30000000000001" fill="url(#sepg)"/><rect x="1293" y="176" width="1" height="18.30000000000001" fill="#66717b" opacity="0.5"/><rect x="1305.6" y="177.4" width="16.3" height="18.4" fill="#e4e4e4"/><path d="M1317.4 184.4 H1327 V180.3 L1334 186.6 L1327 192.9 V188.4 H1317.4Z" fill="#74a7d4"/><path d="M1407.8 185.9H1415.9L1411.85 189.9Z" fill="#e2e2e2"/><rect x="1422.6" y="173" width="2" height="24.30000000000001" fill="url(#sepg)"/><rect x="1424.6" y="176" width="1" height="18.30000000000001" fill="#66717b" opacity="0.5"/><rect x="1442" y="177.0" width="13" height="1.5" fill="#9a9a9a"/><rect x="1447.2" y="180.20000000000002" width="12.599999999999909" height="1.5" fill="#9a9a9a"/><rect x="1447.2" y="183.3" width="12.599999999999909" height="1.5" fill="#9a9a9a"/><rect x="1442" y="186.60000000000002" width="13" height="1.5" fill="#9a9a9a"/><rect x="1447.2" y="189.9" width="12.599999999999909" height="1.5" fill="#9a9a9a"/><path d="M207.5 718.5 L216 718.5 L211.75 713.5Z M207.5 721.5 L216 721.5 L211.75 726Z" fill="#b3aaa3"/><path d="M1458 718.6 L1466 718.6 L1462 714Z M1458 721.4 L1466 721.4 L1462 725.8Z" fill="#b8aea6"/><path d="M195.5 757.5 L206.5 768.5 M206.5 757.5 L195.5 768.5" stroke="#5f6972" stroke-width="2.8"/><path d="M378 757.5 L389 768.5 M389 757.5 L378 768.5" stroke="#5f6972" stroke-width="2.8"/><path d="M1411 773.9 V766.6 Q1411 764.6 1413 764.6 H1431 Q1433 764.6 1433 766.6 V773.9Z" fill="#8b949c"/><rect x="1413" y="769.6" width="18" height="2.6" fill="#252e37"/><path d="M1440 773.9000000000001 V757.2 Q1440 755.2 1442 755.2 H1460 Q1462 755.2 1462 757.2 V773.9000000000001Z" fill="#8b949c"/><rect x="1441.8" y="759.8000000000001" width="18.4" height="12.3" fill="#2e3842"/><ellipse cx="40.8" cy="797.4" rx="12" ry="7.2" fill="none" stroke="url(#ring)" stroke-width="3.6"/><path d="M38.4 794.4 H47.5 C52 794.4 53 802 48.5 803 L53.6 809.5 H49 L45 803.5 H42.5 V809.5 H38.4Z M42.5 797.5 V800.6 H47 C48.6 800.6 48.6 797.5 47 797.5Z" fill="#2a7de1" fill-rule="evenodd"/><path d="M180 805 C181 797 186 794.5 191 794.5 L191 791 L198 797.5 L191 804 L191 800 C186.5 800 182.5 801.5 180 805Z" fill="#d6d9dd"/><path d="M1466 787 L1455.5 797.5" stroke="#c4c9ce" stroke-width="2.8" stroke-linecap="round"/><path d="M1450.6 798.2 L1453.5 797 L1456 799.5 L1453.3 806.2 L1443.5 809.8 L1437.8 807.4Z" fill="#c4c9ce"/><rect x="1437" y="783" width="32" height="30" fill="#4e5a65" opacity="0.0"/><path d="M2943 162.20000000000002 V154.9 Q2943 152.9 2945 152.9 H2963 Q2965 152.9 2965 154.9 V162.20000000000002Z" fill="#8b949c"/><rect x="2945" y="157.9" width="18" height="2.6" fill="#252e37"/><path d="M2972 162.2 V145.5 Q2972 143.5 2974 143.5 H2992 Q2994 143.5 2994 145.5 V162.2Z" fill="#8b949c"/><rect x="2973.8" y="148.1" width="18.4" height="12.3" fill="#2e3842"/><g transform="translate(1500,178.6) scale(1.0)"><path d="M4 3.5 L9 3.5 L11 1 L20 1 L22 3 L22 17 L4 17Z" fill="#dcdcdc" stroke="#b89a3c" stroke-width="0.8"/><path d="M0.5 8.5 L15.5 8.5 L22.5 18.5 L5 18.5Z" fill="url(#fold)" stroke="#b08f2e" stroke-width="0.8"/><path d="M14 7.5 C17 4 21 3.6 25 4.2 L25 1 L31 6 L25 11 L25 7.8 C21 7.2 17.5 7.6 14 9.5Z" fill="#1fa37e"/></g><rect x="1544.4" y="178.3" width="19.59999999999991" height="20.0" rx="1.5" fill="#77a4d3" stroke="#5b86b5" stroke-width="0.6"/><rect x="1546.7520000000002" y="179.3" width="14.895999999999932" height="7.6" fill="#e8e8e8"/><rect x="1548.712" y="190.70000000000002" width="10.583999999999952" height="7.6" fill="#e8e8e8"/><rect x="1550.28" y="192.70000000000002" width="3.3319999999999848" height="5.6000000000000005" fill="#77a4d3"/><rect x="1578" y="173.3" width="2" height="24.099999999999994" fill="url(#sepg)"/><rect x="1580" y="176.3" width="1" height="18.099999999999994" fill="#66717b" opacity="0.5"/><rect x="1591.9" y="178.3" width="20.1" height="18.2" rx="1.5" fill="#e6e6e6"/><rect x="1591.9" y="178.3" width="20.1" height="3" rx="1.5" fill="#c5c9cf"/><rect x="1597.9" y="181" width="1" height="15.5" fill="#8d97a2"/><rect x="1604.4" y="181" width="1" height="15.5" fill="#8d97a2"/><rect x="1591.9" y="186" width="20.1" height="1" fill="#8d97a2"/><rect x="1591.9" y="191" width="20.1" height="1" fill="#8d97a2"/><path d="M1603 190 C1604 185.5 1608 183.5 1613.5 183.3 L1613.5 180 L1621 184.3 L1613.5 189.5 L1613.5 186.3 C1609 186.3 1605.5 187.5 1603 190Z" fill="#1fa37e"/><path d="M1752.9 186.7H1761L1756.95 190.9Z" fill="#e2e2e2"/><rect x="1774" y="173.3" width="2" height="23.399999999999977" fill="url(#sepg)"/><rect x="1776" y="176.3" width="1" height="17.399999999999977" fill="#66717b" opacity="0.5"/><circle cx="1796.3" cy="187.4" r="10" fill="#e6e6e6"/><path d="M1796.3 187.4 L1796.3 177.4 A10 10 0 0 1 1806.1 189.3Z" fill="#5fa597"/><circle cx="1796.3" cy="187.4" r="2.2" fill="#4e5a65"/><path d="M1889.8 186.2H1898.2L1894.0 190.6Z" fill="#e2e2e2"/><rect x="1910.5" y="173.3" width="2" height="23.399999999999977" fill="url(#sepg)"/><rect x="1912.5" y="176.3" width="1" height="17.399999999999977" fill="#66717b" opacity="0.5"/><g transform="translate(1923,173.5) scale(1.0)" opacity="1.0"><path d="M25 1 L18 9" stroke="#c9553f" stroke-width="2.6" stroke-linecap="round"/><path d="M15.5 8 L20.5 12 C19.5 17 15 22 11 25 C7 23 3 19.5 0.5 16.5 C5 14 11 11 15.5 8Z" fill="#c8ae6c"/><path d="M9 12.5 L16.5 18.5 M11.5 10.8 L18.5 16" stroke="#9b6a2e" stroke-width="1.1"/><ellipse cx="15" cy="24.5" rx="8" ry="1.5" fill="#000" opacity="0.15"/></g><rect x="2862" y="179.0" width="18" height="1.6" fill="#c3c7cb"/><rect x="2862" y="183.2" width="18" height="1.6" fill="#c3c7cb"/><rect x="2862" y="187.4" width="18" height="1.6" fill="#c3c7cb"/><rect x="2862" y="191.6" width="18" height="1.6" fill="#c3c7cb"/><rect x="2862" y="195.8" width="18" height="1.6" fill="#c3c7cb"/><path d="M2926.5 186.5H2935L2930.75 190.7Z" fill="#e2e2e2"/><rect x="2948" y="173" width="2" height="24" fill="url(#sepg)"/><rect x="2950" y="176" width="1" height="18" fill="#66717b" opacity="0.5"/><path d="M2977.02 179.12 A8.4 8.4 0 1 0 2978.63 191.40" fill="none" stroke="#c2c8d0" stroke-width="5.6"/><path d="M2983.0 174.6 L2983.0 184.5 L2973.0 184.5Z" fill="#c2c8d0"/><path d="M2992.7 186H3001L2996.85 190.2Z" fill="#e2e2e2"/><path d="M1525 220H1533.1L1529.05 224.2Z" fill="#e2e2e2"/><rect x="1546" y="206.9" width="2" height="24.400000000000006" fill="url(#sepg)"/><rect x="1548" y="209.9" width="1" height="18.400000000000006" fill="#66717b" opacity="0.5"/><rect x="1566.1" y="210.2" width="14" height="14.3" rx="2.5" fill="#a866b8"/><rect x="1571.2" y="217.9" width="13.7" height="14.9" rx="2.5" fill="#6393cc"/><rect x="1561.1" y="214.9" width="14.6" height="14.6" rx="2.5" fill="#a0b87c"/><path d="M1758 221H1766.25L1762.125 225Z" fill="#e2e2e2"/><circle cx="2819" cy="222" r="6.3" fill="none" stroke="#c5cbd2" stroke-width="2.6"/><path d="M2823 226.5 L2831 234" stroke="#c5cbd2" stroke-width="3.6"/><circle cx="1508.5" cy="317" r="9.3" fill="#80b6e4" stroke="#4f86bd" stroke-width="0.9"/><path d="M1507 312 L1512.3 317 L1507 322Z" fill="#fff"/><circle cx="1508.5" cy="366" r="9.3" fill="#80b6e4" stroke="#4f86bd" stroke-width="0.9"/><path d="M1507 361 L1512.3 366 L1507 371Z" fill="#fff"/><circle cx="1508.5" cy="415" r="9.3" fill="#80b6e4" stroke="#4f86bd" stroke-width="0.9"/><path d="M1507 410 L1512.3 415 L1507 420Z" fill="#fff"/><circle cx="1508.5" cy="464" r="9.3" fill="#80b6e4" stroke="#4f86bd" stroke-width="0.9"/><path d="M1507 459 L1512.3 464 L1507 469Z" fill="#fff"/><circle cx="2971.8" cy="313" r="6.4" fill="none" stroke="#b9c0c6" stroke-width="3.4"/><path d="M2976.8 318 L2981.8 323.5" stroke="#b9c0c6" stroke-width="4.4"/><circle cx="2971.8" cy="362" r="6.4" fill="none" stroke="#b9c0c6" stroke-width="3.4"/><path d="M2976.8 367 L2981.8 372.5" stroke="#b9c0c6" stroke-width="4.4"/><circle cx="2971.8" cy="411" r="6.4" fill="none" stroke="#b9c0c6" stroke-width="3.4"/><path d="M2976.8 416 L2981.8 421.5" stroke="#b9c0c6" stroke-width="4.4"/><rect x="2965" y="452" width="20.7" height="18.5" rx="1.5" fill="#f3f3f3"/><rect x="2965" y="452" width="20.7" height="3" fill="#c2e0f2"/><rect x="2971.5" y="455" width="0.9" height="15.5" fill="#9aa6b2"/><rect x="2978" y="455" width="0.9" height="15.5" fill="#9aa6b2"/><rect x="2965" y="460" width="20.7" height="0.9" fill="#9aa6b2"/><rect x="2965" y="465" width="20.7" height="0.9" fill="#9aa6b2"/><path d="M2943 543.6999999999999 V536.4 Q2943 534.4 2945 534.4 H2963 Q2965 534.4 2965 536.4 V543.6999999999999Z" fill="#8b949c"/><rect x="2945" y="539.4" width="18" height="2.6" fill="#252e37"/><path d="M2972 543.7 V527.0 Q2972 525.0 2974 525.0 H2992 Q2994 525.0 2994 527.0 V543.7Z" fill="#8b949c"/><rect x="2973.8" y="529.6" width="18.4" height="12.3" fill="#2e3842"/><path d="M1503 569.1 L1514.0 560 L1514.0 564.55 L1525 564.55 L1525 573.6500000000001 L1514.0 573.6500000000001 L1514.0 578.2Z" fill="#68798a"/><path d="M1567 569.1 L1556.0 560 L1556.0 564.55 L1545 564.55 L1545 573.6500000000001 L1556.0 573.6500000000001 L1556.0 578.2Z" fill="#68798a"/><rect x="1578" y="554.4" width="2" height="23.399999999999977" fill="url(#sepg)"/><rect x="1580" y="557.4" width="1" height="17.399999999999977" fill="#66717b" opacity="0.5"/><path d="M1601.6 569.1 L1593.6 577.4" stroke="#6f6a5e" stroke-width="3.2" stroke-linecap="round"/><circle cx="1607.6" cy="563.1" r="6.6" fill="#8c969f" stroke="#98a2aa" stroke-width="0.8"/><rect x="1603.2" y="561.6" width="8.8" height="3" fill="#3b8a80"/><rect x="1606.1" y="558.7" width="3" height="8.8" fill="#3b8a80"/><rect x="1688" y="554.4" width="2" height="23.399999999999977" fill="url(#sepg)"/><rect x="1690" y="557.4" width="1" height="17.399999999999977" fill="#66717b" opacity="0.5"/><rect x="1706" y="557.1" width="21" height="20.1" fill="#f0f0f0"/><rect x="1708.3" y="559.8" width="16.5" height="6.7" fill="#5aa6e0"/><rect x="1708.3" y="566.5" width="16.5" height="6.7" fill="#e0b43a"/><path d="M1699.8 563.5 H1706 V561.6 L1712.8 565.8 L1706 570 V568 H1699.8Z" fill="#f4f4f4" stroke="#333" stroke-width="0.5"/><path d="M1793.6 567.9H1802L1797.8 571.9Z" fill="#e2e2e2"/><rect x="1815" y="554.4" width="2" height="23.399999999999977" fill="url(#sepg)"/><rect x="1817" y="557.4" width="1" height="17.399999999999977" fill="#66717b" opacity="0.5"/><rect x="1835" y="558.9" width="18.8" height="20.1" fill="#8a949c"/><circle cx="1835" cy="565.2" r="7.8" fill="#8e4f55"/><path d="M1831.5 561.7 L1838.5 568.7 M1838.5 561.7 L1831.5 568.7" stroke="#c9cdd0" stroke-width="2.4"/><rect x="1866" y="554.4" width="2" height="23.399999999999977" fill="url(#sepg)"/><rect x="1868" y="557.4" width="1" height="17.399999999999977" fill="#66717b" opacity="0.5"/><g transform="translate(1879,554) scale(1.0)" opacity="0.45"><path d="M25 1 L18 9" stroke="#c9553f" stroke-width="2.6" stroke-linecap="round"/><path d="M15.5 8 L20.5 12 C19.5 17 15 22 11 25 C7 23 3 19.5 0.5 16.5 C5 14 11 11 15.5 8Z" fill="#c8ae6c"/><path d="M9 12.5 L16.5 18.5 M11.5 10.8 L18.5 16" stroke="#9b6a2e" stroke-width="1.1"/><ellipse cx="15" cy="24.5" rx="8" ry="1.5" fill="#000" opacity="0.15"/></g><path d="M2992.02 560.52 A8.4 8.4 0 1 0 2993.63 572.80" fill="none" stroke="#c2c8d0" stroke-width="5.6"/><path d="M2998.0 556.0 L2998.0 565.9 L2988.0 565.9Z" fill="#c2c8d0"/></svg>
<div style="left:2975px;top:465px;width:34px;height:34px;background:#efefef;"></div>
<div style="left:1526px;top:472px;width:3px;height:8px;background:#9aa1a8;"></div>
<div style="left:1549px;top:495px;width:11px;height:4px;background:#9aa1a8;"></div>
</body></html>
